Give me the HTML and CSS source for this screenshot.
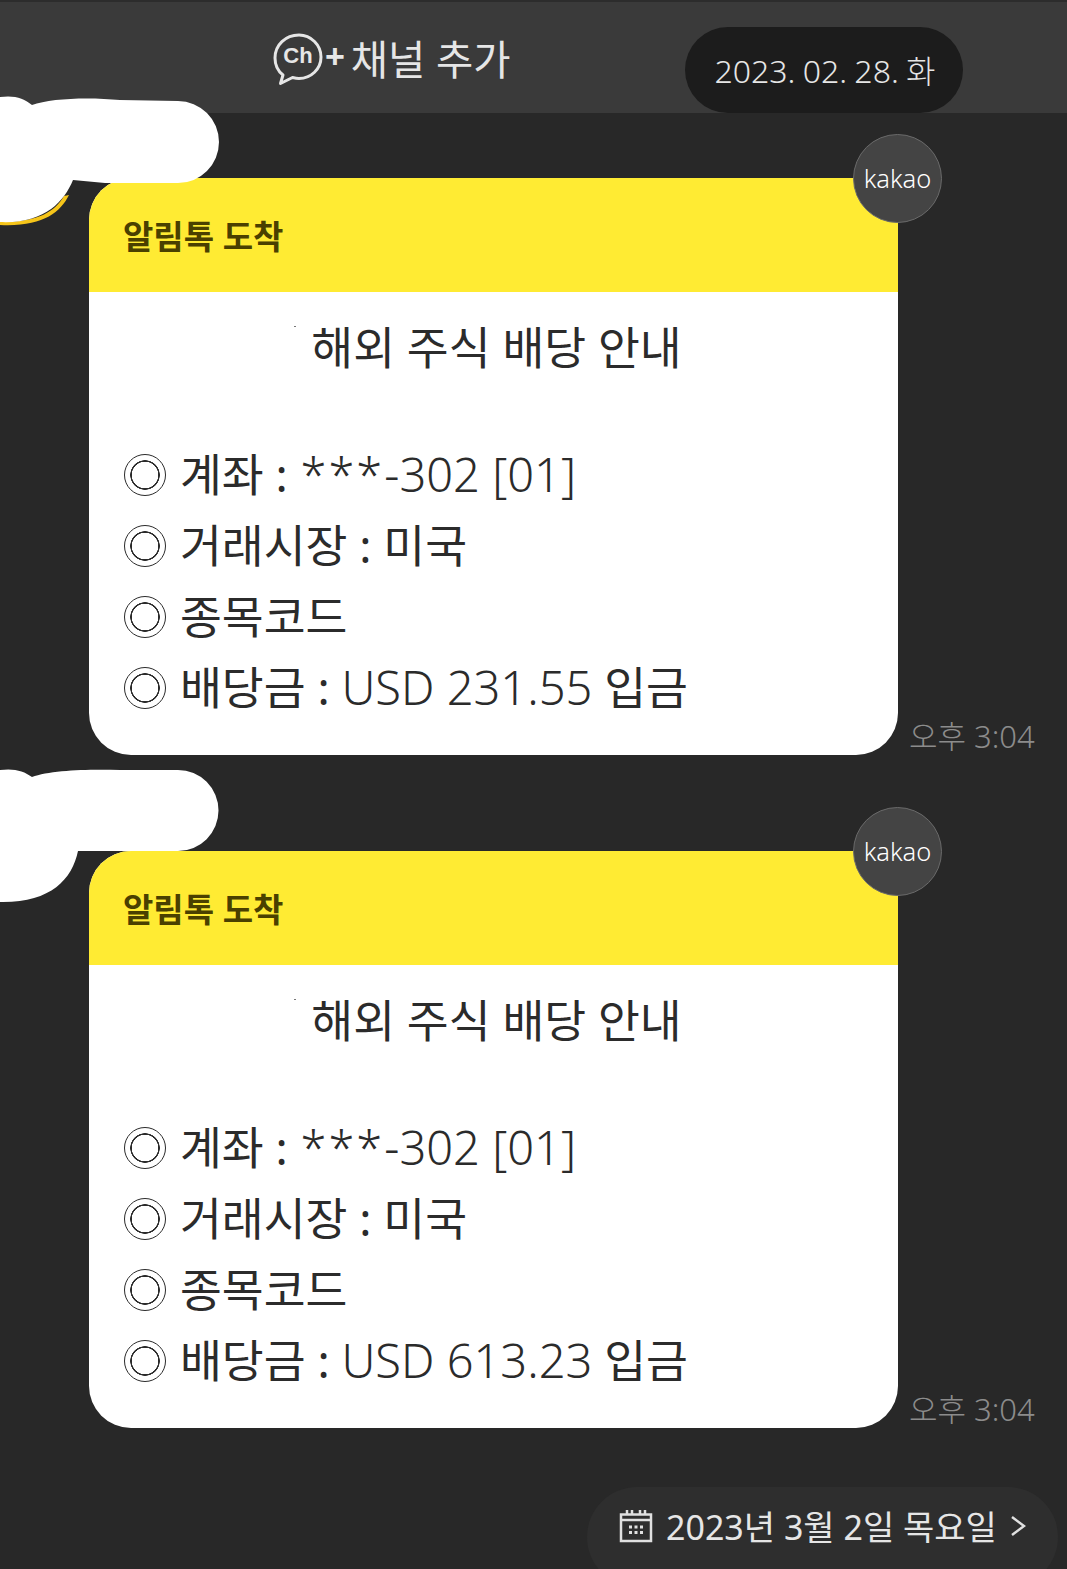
FILE: index.html
```html
<!DOCTYPE html>
<html lang="ko">
<head>
    <meta charset="UTF-8">
    <title>채널 추가</title>
    <link rel="stylesheet" href="styles.css">
</head>
<body>
    <header class="top-bar">
        <div class="channel-add">
            <svg class="ch-icon" width="52" height="54" viewBox="0 0 52 54">
                <path d="M27 3 C13.500 3 3 13 3 26 C3 33.500 6.500 39.500 11 43 L8.500 51.500 L20.500 45.500 C22.500 46 25 46.500 27 46.500 C39 46.500 49 37 49 25 C49 13 39 3 27 3 Z" fill="none" stroke="#e6e6e6" stroke-width="3" stroke-linejoin="round"/>
                <text x="26" y="31" class="ch-text">Ch</text>
            </svg>
            <span class="plus">+</span>
            <span class="channel-label">채널 추가</span>
        </div>
        <div class="date-pill">2023. 02. 28. 화</div>
    </header>

    <main class="chat">
        <div class="message">
            <svg class="blob" width="220" height="130" viewBox="0 0 220 130">
                <path class="blob-edge" d="M64 99 C55 114 40 125 0 125 L0 128 C42 130 60 116 69 98 Z"/>
                <path d="M0 0 C14 -2 24 1 32 8 C50 1 90 0 120 3 L178 4 A41 41 0 0 1 178 86 L105 86 L73 83 C64 105 44 127 0 125 Z" fill="#fff"/>
            </svg>
            <article class="card">
                <div class="card-head">알림톡 도착</div>
                <div class="card-body">
                    <div class="title">해외 주식 배당 안내</div>
                    <div class="row"><span class="mark"></span>계좌 : <span class="num stars">***</span><span class="num">-302 [01]</span></div>
                    <div class="row"><span class="mark"></span>거래시장 : 미국</div>
                    <div class="row"><span class="mark"></span>종목코드</div>
                    <div class="row"><span class="mark"></span>배당금 : <span class="num">USD 231.55</span> 입금</div>
                </div>
                <div class="kakao-badge">kakao</div>
            </article>
            <time class="time">오후 3:04</time>
        </div>

        <div class="message">
            <svg class="blob" width="220" height="136" viewBox="0 0 220 136">
                <path d="M0 0 C14 -2 24 1 32 7 C50 0 90 -1 120 0 L178 0 A40.500 40.500 0 0 1 178 81 L78 81 C72 110 50 133 0 132 Z" fill="#fff"/>
            </svg>
            <article class="card">
                <div class="card-head">알림톡 도착</div>
                <div class="card-body">
                    <div class="title">해외 주식 배당 안내</div>
                    <div class="row"><span class="mark"></span>계좌 : <span class="num stars">***</span><span class="num">-302 [01]</span></div>
                    <div class="row"><span class="mark"></span>거래시장 : 미국</div>
                    <div class="row"><span class="mark"></span>종목코드</div>
                    <div class="row"><span class="mark"></span>배당금 : <span class="num">USD 613.23</span> 입금</div>
                </div>
                <div class="kakao-badge">kakao</div>
            </article>
            <time class="time">오후 3:04</time>
        </div>

        <div class="date-jump">
            <svg width="34" height="34" viewBox="0 0 34 34">
                <path d="M2 5.500 H32 V32 H2 Z M2 11 H32" fill="none" stroke="#e0e0e0" stroke-width="2.500"/>
                <path d="M8 1 V6 M13 1 V6 M21 1 V6 M26 1 V6" stroke="#e0e0e0" stroke-width="2.500"/>
                <path d="M10 16.500 h3 v3 h-3 z M15.500 16.500 h3 v3 h-3 z M21 16.500 h3 v3 h-3 z M10 22 h3 v3 h-3 z M15.500 22 h3 v3 h-3 z M21 22 h3 v3 h-3 z" fill="#e0e0e0"/>
            </svg>
            <span>2023년 3월 2일 목요일</span>
            <svg width="16" height="22" viewBox="0 0 16 22">
                <path d="M2 2 L14 11 L2 20" fill="none" stroke="#e0e0e0" stroke-width="2.500"/>
            </svg>
        </div>
    </main>
</body>
</html>
```

FILE: styles.css
```css
body {
    margin: 0;
    height: 1569px;
    overflow: hidden;
    background-color: #282828;
    font-family: "Noto Sans", "Noto Sans CJK KR", sans-serif;
    color: #2b2b2b;
}
.top-bar {
    position: relative;
    box-sizing: border-box;
    height: 113px;
    border-top: 2px solid #2c2c2c;
    background-color: #3a3a3a;
}
.channel-add {
    display: flex;
    align-items: center;
    gap: 6px;
    height: 111px;
    padding-left: 272px;
    padding-top: 2px;
    box-sizing: border-box;
    color: #e6e6e6;
    font-size: 40.500px;
    font-weight: 400;
    line-height: 1;
}
.channel-label {
    margin-top: 3px;
}
.ch-icon {
    margin-right: -5px;
}
.ch-text {
    font-family: "Liberation Sans", sans-serif;
    font-size: 22px;
    font-weight: 700;
    fill: #e6e6e6;
    text-anchor: middle;
}
.plus {
    font-family: "Liberation Sans", sans-serif;
    font-weight: 700;
    font-size: 34px;
    margin-top: -5px;
}
.date-pill {
    position: absolute;
    left: 685px;
    top: 25px;
    display: flex;
    align-items: center;
    justify-content: center;
    width: 278px;
    height: 86px;
    padding-left: 2px;
    padding-bottom: 2px;
    box-sizing: border-box;
    border-radius: 43px;
    background-color: #1c1c1c;
    color: #e6e6e6;
    font-size: 32px;
    font-weight: 300;
    word-spacing: -1px;
}
.chat {
    display: flex;
    flex-direction: column;
    padding-top: 65px;
}
.message {
    position: relative;
    display: flex;
    align-items: flex-end;
    height: 577px;
    margin-bottom: 96px;
    padding-left: 89px;
}
.blob {
    position: absolute;
    left: 0;
    top: -81px;
    z-index: 1;
    overflow: visible;
}
.blob-edge {
    fill: #f6c51a;
}
.card {
    position: relative;
    width: 809px;
    height: 577px;
    border-radius: 42px;
    background-color: #fff;
}
.card-head {
    display: flex;
    align-items: center;
    height: 114px;
    padding-left: 34px;
    box-sizing: border-box;
    border-radius: 42px 0 0 0;
    background-color: #ffeb33;
    color: #4a4000;
    font-size: 33px;
    font-weight: 700;
}
.card-body {
    padding-left: 35px;
    font-size: 45.500px;
    font-weight: 400;
    line-height: 71px;
}
.title {
    position: relative;
    margin-top: 20px;
    margin-bottom: 56px;
    margin-left: -35px;
    padding-left: 6px;
    text-align: center;
}
/* little speck left of the title in the screenshot */
.title::before {
    content: "";
    position: absolute;
    left: 205px;
    top: 14px;
    width: 2px;
    height: 1px;
    background-color: #777;
}
.row {
    display: flex;
    align-items: center;
    white-space: pre;
}
.num {
    font-size: 47px;
    font-weight: 300;
}
.stars {
    margin-left: 1px;
    letter-spacing: 2px;
}
.mark {
    box-sizing: border-box;
    flex: none;
    width: 42px;
    height: 42px;
    margin-right: 14px;
    border: 1.500px solid #2b2b2b;
    border-radius: 50%;
    background: radial-gradient(circle, #fff 0 13px, #2b2b2b 13.500px 14.500px, #fff 15px);
}
.kakao-badge {
    position: absolute;
    right: -44px;
    top: -44px;
    display: flex;
    align-items: center;
    justify-content: center;
    box-sizing: border-box;
    width: 89px;
    height: 89px;
    padding-bottom: 1px;
    border: 1px solid #6a6a6a;
    border-radius: 50%;
    background-color: #444;
    color: #fff;
    font-size: 25.500px;
    font-weight: 300;
}
.time {
    margin-left: 11px;
    margin-bottom: -1px;
    color: #8c8c8c;
    font-size: 31px;
    font-weight: 300;
    line-height: 40px;
}
.date-jump {
    display: flex;
    align-items: center;
    gap: 13px;
    align-self: flex-end;
    box-sizing: border-box;
    width: 471px;
    height: 100px;
    margin-top: -37px;
    margin-right: 9px;
    padding-left: 32px;
    padding-bottom: 23px;
    border-radius: 50px;
    background-color: #2e2e2e;
    color: #e6e6e6;
    font-size: 34px;
}
```
